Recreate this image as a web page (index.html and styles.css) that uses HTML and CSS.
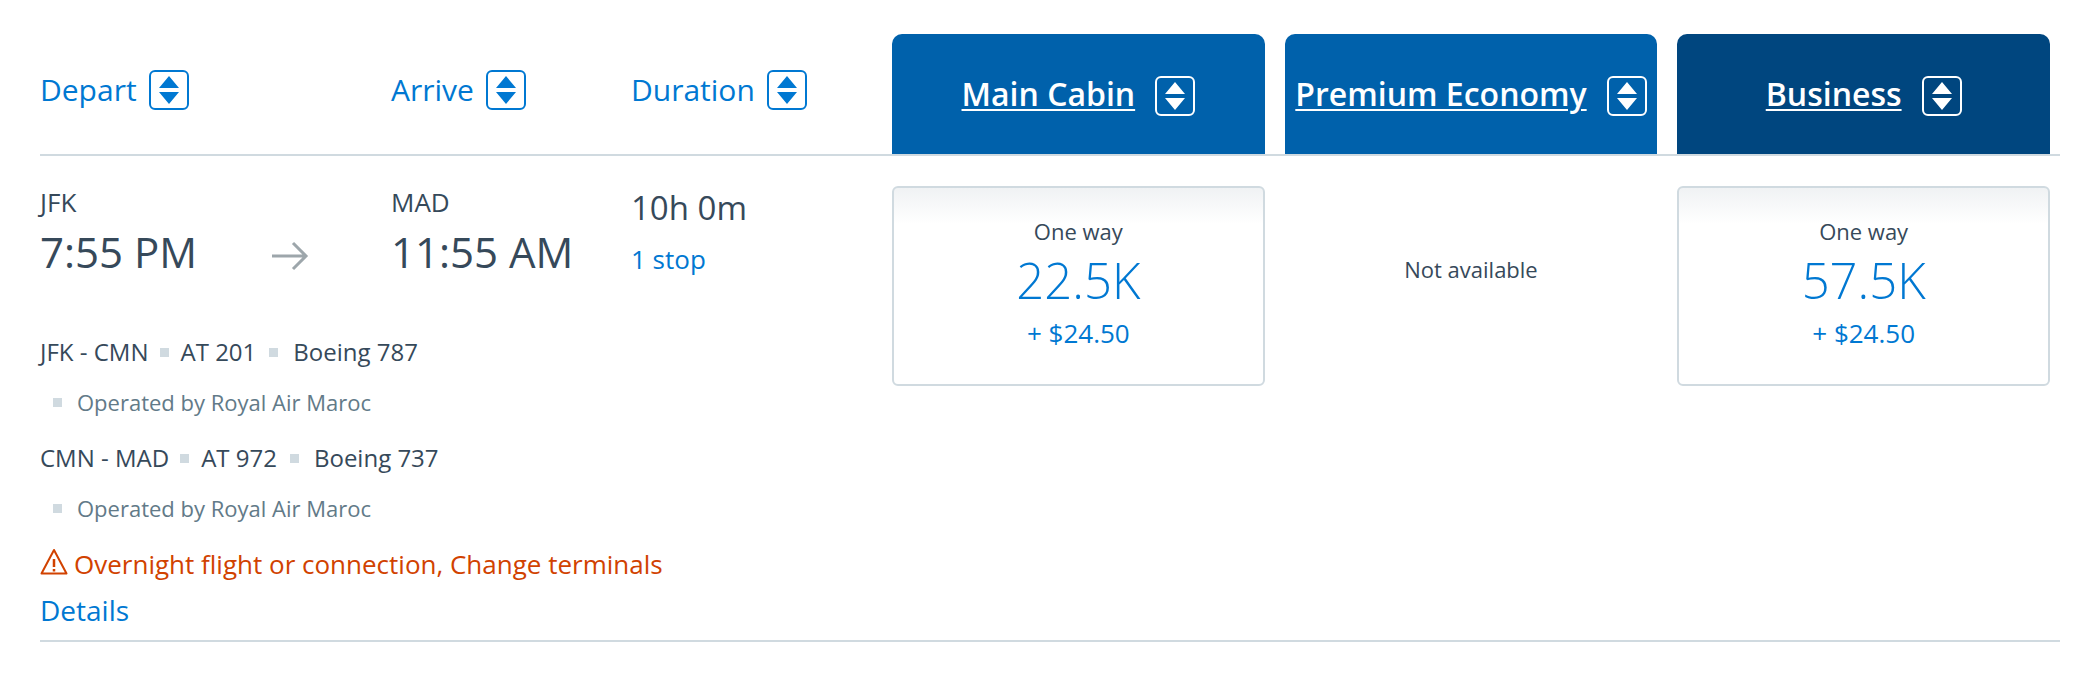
FILE: index.html
```html
<!DOCTYPE html>
<html lang="en">
<head>
<meta charset="utf-8">
<title>Choose flights</title>
<link rel="stylesheet" href="styles.css">
</head>
<body>
<svg class="defs" aria-hidden="true">
  <symbol id="sort" viewBox="0 0 40 40">
    <rect x="1" y="1" width="38" height="38" rx="5" fill="none" stroke="currentColor" stroke-width="2"/>
    <path d="M20 6 30 18H10ZM10 22H30L20 34Z" fill="currentColor"/>
  </symbol>
</svg>
<main class="results">
  <header class="row head">
    <div class="trip">
      <button class="sort" type="button">Depart <svg class="sort-icon" aria-hidden="true"><use href="#sort"/></svg></button>
      <button class="sort" type="button">Arrive <svg class="sort-icon" aria-hidden="true"><use href="#sort"/></svg></button>
      <button class="sort" type="button">Duration <svg class="sort-icon" aria-hidden="true"><use href="#sort"/></svg></button>
    </div>
    <div class="cabins">
      <div class="cabin"><a class="cabin-link" href="#main">Main Cabin</a><button class="cabin-sort" type="button" aria-label="Sort by Main Cabin"><svg class="sort-icon" aria-hidden="true"><use href="#sort"/></svg></button></div>
      <div class="cabin"><a class="cabin-link" href="#premium">Premium Economy</a><button class="cabin-sort" type="button" aria-label="Sort by Premium Economy"><svg class="sort-icon" aria-hidden="true"><use href="#sort"/></svg></button></div>
      <div class="cabin business"><a class="cabin-link" href="#business">Business</a><button class="cabin-sort" type="button" aria-label="Sort by Business"><svg class="sort-icon" aria-hidden="true"><use href="#sort"/></svg></button></div>
    </div>
  </header>
  <article class="row flight">
    <div class="info">
      <div class="trip">
        <div class="depart">
          <div>
            <div class="airport">JFK</div>
            <div class="time">7:55 PM</div>
          </div>
          <svg class="arrow" viewBox="0 0 38 30" aria-hidden="true"><path d="M1 15H34M22 2 35 15 22 28" fill="none" stroke="currentColor" stroke-width="3"/></svg>
        </div>
        <div>
          <div class="airport">MAD</div>
          <div class="time">11:55 AM</div>
        </div>
        <div class="length">
          <div class="duration">10h 0m</div>
          <a class="stops" href="#stops">1 stop</a>
        </div>
      </div>
      <div class="segments">
        <div class="segment"><span>JFK - CMN</span><i class="dot"></i><span>AT 201</span><i class="dot wide"></i><span>Boeing 787</span></div>
        <div class="operator"><i class="dot"></i><span>Operated by Royal Air Maroc</span></div>
        <div class="segment"><span>CMN - MAD</span><i class="dot"></i><span>AT 972</span><i class="dot wide"></i><span>Boeing 737</span></div>
        <div class="operator"><i class="dot"></i><span>Operated by Royal Air Maroc</span></div>
      </div>
      <div class="alert">
        <svg class="alert-icon" viewBox="0 0 28 28" aria-hidden="true"><path d="M14 2 26.500 25.500H1.500Z" fill="none" stroke="currentColor" stroke-width="2" stroke-linejoin="round"/><path d="M14 11V19M14 21V23.500" stroke="currentColor" stroke-width="2.500"/></svg>
        <span>Overnight flight or connection, Change terminals</span>
      </div>
      <a class="details" href="#details">Details</a>
    </div>
    <div class="cabins">
      <button class="fare" type="button"><span class="way">One way</span><span class="miles">22.5K</span><span class="tax">+ $24.50</span></button>
      <div class="none">Not available</div>
      <button class="fare" type="button"><span class="way">One way</span><span class="miles">57.5K</span><span class="tax">+ $24.50</span></button>
    </div>
  </article>
</main>
</body>
</html>
```
FILE: styles.css
```css
* { box-sizing: border-box; }
body { margin: 0; background: #fff; color: #36495a; font-family: "Open Sans", "Noto Sans", sans-serif; font-weight: 400; }
button { margin: 0; padding: 0; border: 0; background: none; color: inherit; font: inherit; cursor: pointer; }
a { color: #0078d2; text-decoration: none; }
.defs { display: none; }
.results { padding: 34px 30px 0 40px; }
.row { display: grid; grid-template-columns: minmax(0, 852fr) minmax(0, 1158fr); padding-right: 10px; border-bottom: 2px solid #d0dae0; }
.trip { display: grid; grid-template-columns: 351fr 240fr 261fr; }
.cabins { display: grid; grid-template-columns: repeat(3, minmax(0, 1fr)); gap: 20px; }
.head .trip { padding: 36px 0 44px; }
.sort { display: flex; align-items: center; gap: 12px; height: 40px; color: #0078d2; font-size: 30px; line-height: 36px; }
.sort-icon { display: block; flex: none; width: 40px; height: 40px; }
.cabin { display: flex; align-items: center; justify-content: center; gap: 20px; height: 120px; padding-top: 4px; border-radius: 10px 10px 0 0; background: #0061ab; color: #fff; }
.business { background: #00467f; }
.cabin-link { padding-bottom: 4px; color: #fff; font-size: 32px; font-weight: 600; line-height: 40px; white-space: nowrap; text-decoration: underline; text-decoration-thickness: 2px; text-underline-offset: 3px; }
.flight { padding-top: 30px; }
.airport { font-size: 26px; line-height: 32px; }
.time { font-size: 42px; line-height: 68px; white-space: nowrap; }
.depart { display: flex; align-items: flex-start; justify-content: space-between; padding-right: 82px; }
.arrow { width: 38px; height: 30px; margin-top: 55px; color: #9da6ab; }
.length { display: grid; align-content: start; }
.duration { font-size: 33px; line-height: 44px; }
.stops { font-size: 26px; line-height: 58px; }
.segments { padding-top: 38px; }
.segment, .operator { display: flex; align-items: center; white-space: nowrap; }
.segment { height: 52px; padding-bottom: 2px; font-size: 24px; }
.operator { height: 54px; padding: 0 0 6px 13px; color: #627a88; font-size: 22px; }
.dot { flex: none; width: 9px; height: 9px; margin: 2px 12px 0 11px; background: #d0dae0; }
.operator .dot { margin: 0 15px 0 0; }
.wide { margin-left: 13px; margin-right: 15px; }
.alert { display: flex; align-items: center; gap: 6px; height: 52px; color: #d14200; font-size: 26px; }
.alert-icon { width: 28px; height: 28px; margin-bottom: 4px; }
.details { display: block; padding-bottom: 10px; font-size: 28px; line-height: 40px; }
.fare { display: flex; flex-direction: column; align-items: center; height: 200px; padding-top: 27px; border: 2px solid #d0dae0; border-radius: 6px; background: linear-gradient(#f0f2f4, #fff 36px); }
.way { font-size: 22px; line-height: 32px; }
.miles { color: #0078d2; font-size: 49px; font-weight: 300; line-height: 66px; }
.tax { color: #0078d2; font-size: 26px; line-height: 40px; }
.none { padding-top: 67px; font-size: 22px; line-height: 32px; text-align: center; }
```
